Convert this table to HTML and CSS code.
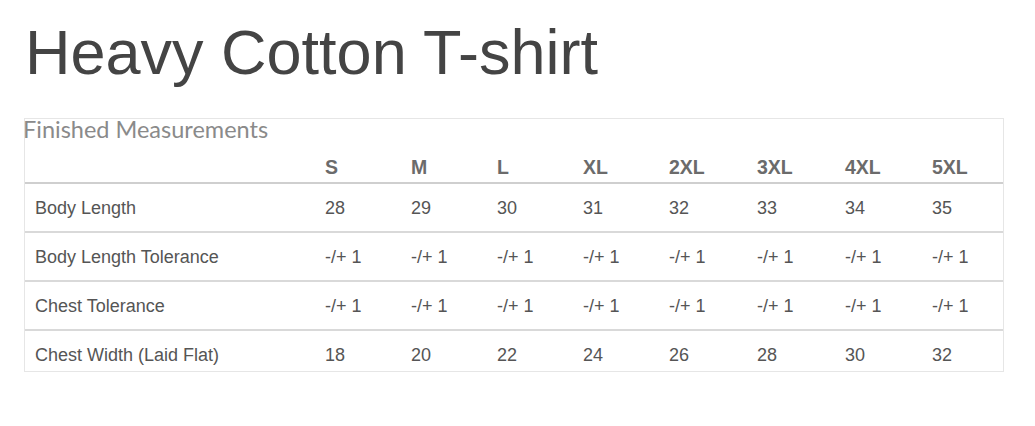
FILE: index.html
```html
<!DOCTYPE html>
<html>
<head>
<meta charset="utf-8">
<link rel="stylesheet" href="styles.css">
</head>
<body>
<h1 class="title">Heavy Cotton T-shirt</h1>
<div class="box">
  <div class="caption">Finished Measurements</div>
  <div class="table-wrap">
    <table class="sizes">
      <colgroup>
        <col class="c-label"><col class="c-86"><col class="c-86"><col class="c-86"><col class="c-86"><col class="c-88"><col class="c-88"><col class="c-87"><col class="c-rest">
      </colgroup>
      <thead>
        <tr><th></th><th>S</th><th>M</th><th>L</th><th>XL</th><th>2XL</th><th>3XL</th><th>4XL</th><th>5XL</th></tr>
      </thead>
      <tbody>
        <tr><td>Body Length</td><td>28</td><td>29</td><td>30</td><td>31</td><td>32</td><td>33</td><td>34</td><td>35</td></tr>
        <tr><td>Body Length Tolerance</td><td>-/+ 1</td><td>-/+ 1</td><td>-/+ 1</td><td>-/+ 1</td><td>-/+ 1</td><td>-/+ 1</td><td>-/+ 1</td><td>-/+ 1</td></tr>
        <tr><td>Chest Tolerance</td><td>-/+ 1</td><td>-/+ 1</td><td>-/+ 1</td><td>-/+ 1</td><td>-/+ 1</td><td>-/+ 1</td><td>-/+ 1</td><td>-/+ 1</td></tr>
        <tr><td>Chest Width (Laid Flat)</td><td>18</td><td>20</td><td>22</td><td>24</td><td>26</td><td>28</td><td>30</td><td>32</td></tr>
      </tbody>
    </table>
  </div>
</div>
</body>
</html>
```

FILE: styles.css
```css
html, body {
  margin: 0;
  padding: 0;
  background: #fff;
}
body {
  font-family: "Liberation Sans", Arial, sans-serif;
}
.title {
  margin: 21px 0 34px 25px;
  font-size: 63px;
  line-height: 63px;
  font-weight: 400;
  color: #444;
}
.box {
  box-sizing: border-box;
  margin-left: 24px;
  width: 980px;
  height: 254px;
  border: 1px solid #e6e6e6;
}
.caption {
  margin: -3px 0 0 -2px;
  height: 27px;
  font-family: Lato, "Liberation Sans", sans-serif;
  font-size: 23.5px;
  line-height: 26px;
  color: #8a8a8a;
}
.table-wrap {
  height: 228px;
  overflow: hidden;
}
.sizes {
  border-collapse: collapse;
  table-layout: fixed;
  width: 978px;
}
.c-label { width: 290px; }
.c-86 { width: 86px; }
.c-88 { width: 88px; }
.c-87 { width: 87px; }
.c-rest { width: 81px; }
.sizes th {
  height: 22px;
  padding: 13px 0 4px 10px;
  text-align: left;
  font-size: 19.5px;
  line-height: 22px;
  font-weight: 700;
  color: #6b6b6b;
  border-bottom: 2px solid #cfcfcf;
}
.sizes td {
  height: 47px;
  padding: 0 0 0 10px;
  text-align: left;
  vertical-align: middle;
  font-size: 18px;
  line-height: 22px;
  color: #555;
  border-bottom: 2px solid #d9d9d9;
}
```
